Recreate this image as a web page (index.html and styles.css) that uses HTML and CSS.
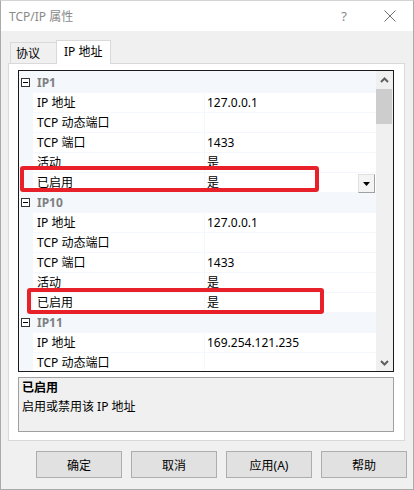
FILE: index.html
```html
<!DOCTYPE html>
<html lang="zh-CN">
<head>
  <meta charset="UTF-8">
  <title>TCP/IP 属性</title>
  <link rel="stylesheet" href="styles.css">
</head>
<body>

<div class="window">
  <div class="titlebar">
    <span class="title">TCP/IP 属性</span>
    <span class="help">?</span>
    <svg class="close" width="12" height="12" viewBox="0 0 12 12">
      <path d="M0.5 0.5 L11.5 11.5 M11.5 0.5 L0.5 11.5" stroke="#6f6f6f" stroke-width="1" fill="none"/>
    </svg>
  </div>

  <div class="client">
    <div class="tabs">
      <div class="tab">协议</div>
      <div class="tab active">IP 地址</div>
    </div>

    <div class="panel">
      <div class="grid">
        <div class="rows">
          <div class="cat"><span class="toggle"></span>IP1</div>
          <div class="row"><span class="name">IP 地址</span><span class="value">127.0.0.1</span></div>
          <div class="row"><span class="name">TCP 动态端口</span><span class="value"></span></div>
          <div class="row"><span class="name">TCP 端口</span><span class="value">1433</span></div>
          <div class="row"><span class="name">活动</span><span class="value">是</span></div>
          <div class="row"><span class="name">已启用</span><span class="value">是<span class="drop"><svg width="7" height="4" viewBox="0 0 7 4"><path d="M0 0 H7 L3.5 4 Z" fill="#000"/></svg></span></span></div>

          <div class="cat"><span class="toggle"></span>IP10</div>
          <div class="row"><span class="name">IP 地址</span><span class="value">127.0.0.1</span></div>
          <div class="row"><span class="name">TCP 动态端口</span><span class="value"></span></div>
          <div class="row"><span class="name">TCP 端口</span><span class="value">1433</span></div>
          <div class="row"><span class="name">活动</span><span class="value">是</span></div>
          <div class="row"><span class="name">已启用</span><span class="value">是</span></div>

          <div class="cat"><span class="toggle"></span>IP11</div>
          <div class="row"><span class="name">IP 地址</span><span class="value">169.254.121.235</span></div>
          <div class="row"><span class="name">TCP 动态端口</span><span class="value"></span></div>
        </div>

        <div class="scroll">
          <div class="arrow">
            <svg width="9" height="6" viewBox="0 0 9 6"><path d="M1 5 L4.5 1.5 L8 5" stroke="#606060" stroke-width="2" fill="none"/></svg>
          </div>
          <div class="thumb"></div>
          <div class="track"></div>
          <div class="arrow">
            <svg width="9" height="6" viewBox="0 0 9 6"><path d="M1 1 L4.5 4.5 L8 1" stroke="#606060" stroke-width="2" fill="none"/></svg>
          </div>
        </div>

        <div class="mark mark-1"></div>
        <div class="mark mark-2"></div>
      </div>

      <div class="desc">
        <div class="desc-title">已启用</div>
        <div>启用或禁用该 IP 地址</div>
      </div>
    </div>

    <div class="buttons">
      <button>确定</button>
      <button>取消</button>
      <button>应用(A)</button>
      <button>帮助</button>
    </div>
  </div>
</div>

</body>
</html>
```

FILE: styles.css
```css
body {
  margin: 0;
  font-family: "Noto Sans", "Noto Sans CJK SC", sans-serif;
  font-size: 12px;
  color: #000;
  background: #fff;
}

.window {
  width: 414px;
  height: 490px;
  box-sizing: border-box;
  border: 1px solid #aaaaaa;
  border-top-color: #d4d4d4;
  display: flex;
  flex-direction: column;
}

.titlebar {
  height: 30px;
  background: #fff;
  display: flex;
  align-items: center;
  padding-left: 8px;
}

.title {
  color: #8a8a8a;
  flex: 1;
}

.help {
  color: #8a8a8a;
  font-size: 13px;
  margin-right: 37px;
}

.close {
  margin-right: 17px;
}

.client {
  flex: 1;
  background: #f0f0f0;
}

.tabs {
  display: flex;
  align-items: flex-end;
  height: 23px;
  margin-top: 9px;
  padding-left: 9px;
}

.tab {
  height: 21px;
  line-height: 21px;
  box-sizing: border-box;
  width: 46px;
  padding-left: 5px;
  border: 1px solid #d9d9d9;
  border-bottom: none;
  border-right: none;
  background: #f0f0f0;
}

.tab.active {
  position: relative;
  z-index: 1;
  height: 24px;
  line-height: 22px;
  width: 55px;
  padding-left: 7px;
  margin-bottom: -1px;
  border-right: 1px solid #d9d9d9;
  background: #fff;
}

.panel {
  width: 397px;
  height: 378px;
  box-sizing: border-box;
  margin-left: 7px;
  border: 1px solid #d9d9d9;
  background: #fff;
  padding: 6px 0 0 9px;
}

.grid {
  position: relative;
  display: flex;
  width: 376px;
  height: 302px;
  box-sizing: border-box;
  border: 1px solid #1a1a1a;
  overflow: hidden;
}

.rows {
  flex: 1;
  background: #f4f7fc;
  padding-top: 2px;
  overflow: hidden;
}

.row, .cat {
  display: flex;
  height: 19px;
  line-height: 19px;
  margin-bottom: 1px;
}

.cat {
  align-items: center;
  font-weight: bold;
  color: #7f7f7f;
}

.toggle {
  position: relative;
  width: 9px;
  height: 9px;
  box-sizing: border-box;
  border: 1px solid #333;
  margin: 0 7px 0 2px;
  background: #fff;
}

.toggle::after {
  content: "";
  position: absolute;
  left: 1px;
  right: 1px;
  top: 3px;
  height: 1px;
  background: #000;
}

.name {
  width: 171px;
  margin-left: 14px;
  padding-left: 4px;
  box-sizing: border-box;
  background: #fff;
}

.value {
  position: relative;
  flex: 1;
  margin-left: 1px;
  padding-left: 2px;
  background: #fff;
}

.drop {
  position: absolute;
  right: 1px;
  top: 1px;
  width: 17px;
  height: 19px;
  box-sizing: border-box;
  background: #f4f4f4;
  border: 1px solid #e0e0e0;
  border-right-color: #a0a0a0;
  border-bottom-color: #a0a0a0;
  display: flex;
  align-items: center;
  justify-content: center;
}

.scroll {
  width: 17px;
  background: #f0f0f0;
  display: flex;
  flex-direction: column;
}

.arrow {
  height: 17px;
  display: flex;
  align-items: center;
  justify-content: center;
}

.thumb {
  height: 35px;
  margin: 1px 1px 0 0;
  background: #cdcdcd;
}

.track {
  flex: 1;
}

.mark {
  position: absolute;
  box-sizing: border-box;
  border: 4px solid #e8202a;
  border-radius: 3px;
}

.mark-1 {
  left: 1px;
  top: 95px;
  width: 299px;
  height: 26px;
}

.mark-2 {
  left: 8px;
  top: 217px;
  width: 297px;
  height: 26px;
}

.desc {
  width: 376px;
  height: 55px;
  box-sizing: border-box;
  margin-top: 5px;
  border: 1px solid #a0a0a0;
  background: #f0f0f0;
  padding-left: 3px;
  line-height: 19px;
}

.desc-title {
  font-weight: bold;
}

.buttons {
  display: flex;
  gap: 9px;
  margin: 10px 0 0 35px;
}

.buttons button {
  width: 86px;
  height: 27px;
  font-family: inherit;
  font-size: 12px;
  color: #000;
  background: #e1e1e1;
  border: 1px solid #adadad;
  padding: 0;
}
```
